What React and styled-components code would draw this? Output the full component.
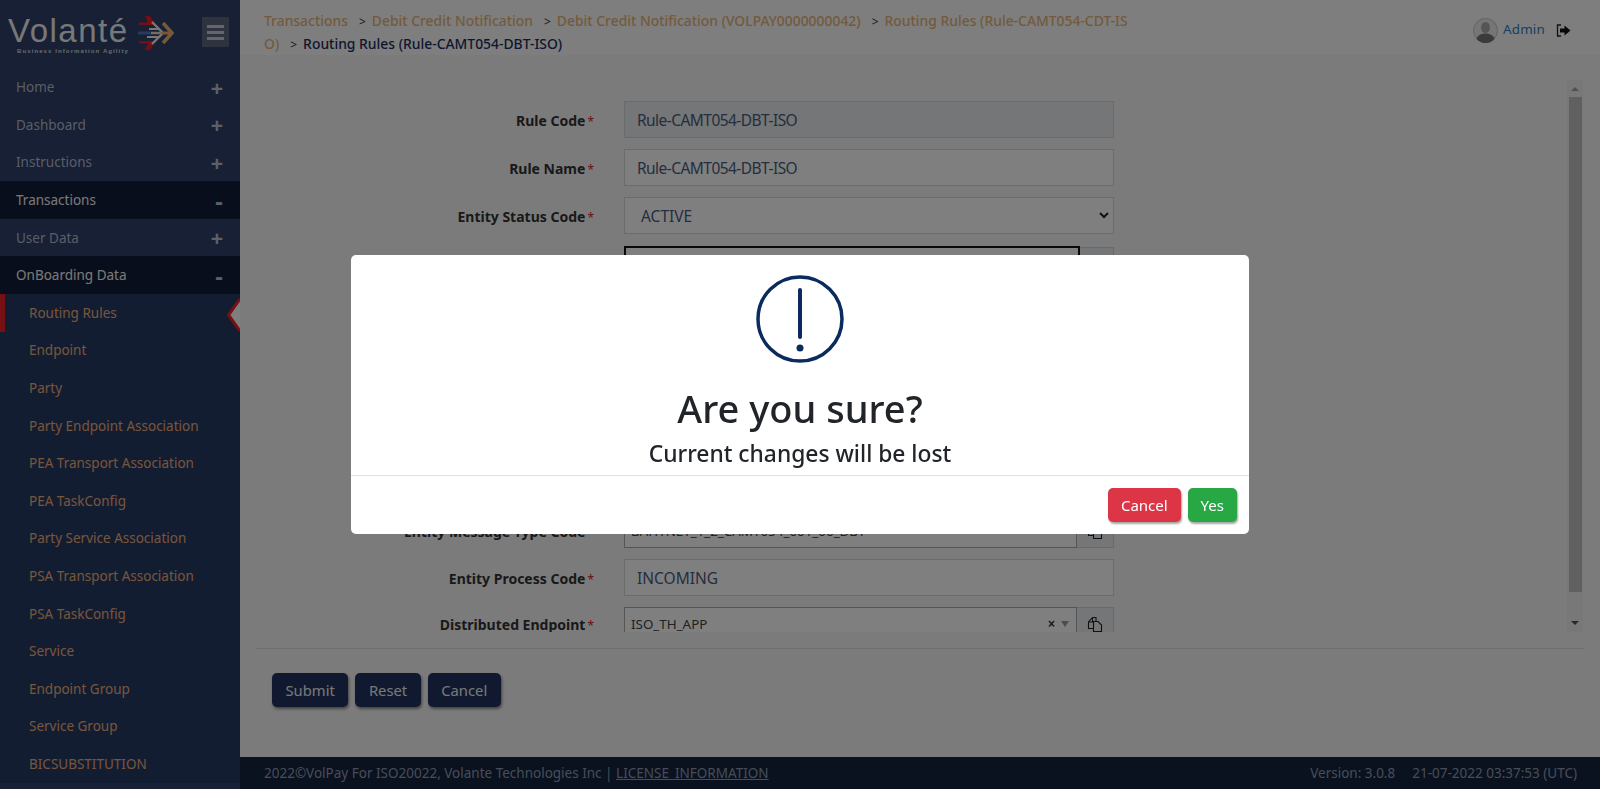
import React from 'react';
import styled, { createGlobalStyle } from 'styled-components';

const Global = createGlobalStyle`
  html, body { margin: 0; padding: 0; height: 100%; overflow: hidden; }
  body { font-family: "Noto Sans", "Open Sans", sans-serif; background: #f8f8f8; }
  * { box-sizing: border-box; }
`;
const Page = styled.div`display: flex; width: 1600px; height: 789px; overflow: hidden;`;
const Sidebar = styled.aside`width: 240px; flex: none; background: #2e4069; display: flex; flex-direction: column; overflow: hidden;`;
const Brand = styled.div`height: 68.5px; flex: none; display: flex; align-items: flex-start; padding: 17px 11px 0 8px; justify-content: space-between;`;
const LogoWrap = styled.div`display: flex; gap: 8px; margin-top: -1px;`;
const LogoText = styled.div`display: flex; flex-direction: column; align-items: flex-start; width: 121px;`;
const LogoWord = styled.div`font: 400 33px/30px "Liberation Sans", sans-serif; color: #f0f0f0; letter-spacing: 1.5px; height: 30px; white-space: nowrap;`;
const LogoSub = styled.div`font: 700 6px/8px "Liberation Sans", sans-serif; color: #d8d8d8; letter-spacing: 1.1px; white-space: nowrap; margin: 1px 0 0 9px;`;
const Burger = styled.div`width: 27px; height: 30px; background: #5c677f; display: flex; flex-direction: column; justify-content: center; gap: 3px; padding: 0 5px;`;
const BurgerLine = styled.span`height: 3px; background: #c9ccd6;`;
const NavRow = styled.div`
  height: 37.6px; flex: none; position: relative; display: flex; align-items: center; justify-content: space-between;
  padding: 0 16px; font-size: 13.5px; color: ${p => (p.$open ? '#f2f2f2' : '#b4bccb')};
  background: ${p => (p.$open ? '#121d38' : '#2e4069')};
`;
const NavSign = styled.span`font: 700 ${p => (p.$minus ? 24 : 21)}px/20px "Liberation Sans", sans-serif; color: #b9c0cf; margin: 3px 1px 0 0;`;
const SubRow = styled.div`
  height: 37.6px; flex: none; position: relative; display: flex; align-items: center; padding-left: 29px;
  font-size: 13.5px; color: #eeac78; background: #243a62;
  ${p => p.$active && 'border-left: 5px solid #ee2027; padding-left: 24px;'}
`;
const Notch = styled.svg`position: absolute; right: 0; top: 4px;`;
const Content = styled.div`flex: 1; display: flex; flex-direction: column; min-width: 0; background: #f6f6f6;`;
const Header = styled.header`height: 55px; flex: none; background: #fdfdfd; display: flex; justify-content: space-between; padding: 10px 27px 0 24px;`;
const Crumbs = styled.div`width: 872px; font-size: 13.9px; font-weight: 500; line-height: 22px; word-break: break-all; color: #e6b478;`;
const Sep = styled.span`color: #333; font-weight: 400; margin: 0 6px 0 11px; font-size: 12px;`;
const Current = styled.span`color: #1c2f5c;`;
const UserBox = styled.div`display: flex; align-items: flex-start; padding-top: 8px;`;
const AdminName = styled.span`font-size: 13.4px; color: #2f7fc8; margin: 2px 11px 0 5px; line-height: 19px; letter-spacing: 0.2px;`;
const LogoutIcon = styled.svg`margin: 6px 2px 0 0;`;
const Body = styled.div`height: 593px; flex: none; display: flex; padding: 25px 17px 16px 0; overflow: hidden;`;
const Form = styled.div`flex: 1; display: flex; flex-direction: column; gap: 11px; padding-top: 21px; overflow: hidden;`;
const Row = styled.div`display: grid; grid-template-columns: 354px 490px; column-gap: 30px; flex: none; height: ${p => p.$h || 37}px; align-items: center;`;
const Label = styled.label`text-align: right; font-size: 14px; font-weight: 700; color: #333; white-space: nowrap; padding-top: 1px;`;
const Star = styled.span`color: #e02020; margin-left: 2px; font-weight: 400; font-size: 12px;`;
const Input = styled.div`
  height: 100%; border: 1px solid #d6d6d6; background: ${p => (p.$ro ? '#e9ecef' : '#fff')}; color: #4a5c7c;
  font-size: 15.5px; display: flex; align-items: center; padding-left: ${p => p.$pad || 12}px; justify-content: space-between;
  ${p => p.$tight && 'letter-spacing: -0.55px;'}
`;
const Chevron = styled.svg`margin-right: 4px;`;
const PickRow = styled.div`display: flex; height: 100%;`;
const Pick = styled.div`
  flex: 1; border: ${p => (p.$focus ? '2px solid #111' : '1px solid #aaa')}; background: #fff; ${p => p.$focus && 'margin-top: 1px;'}
  display: flex; align-items: center; justify-content: space-between; padding: 0 7px 0 6px; color: #444; font-size: 13.4px; min-width: 0;
`;
const PickTools = styled.span`display: flex; align-items: center; gap: 6px; color: #333;`;
const ClearX = styled.span`font: 700 12px/12px "Liberation Sans", sans-serif;`;
const Drop = styled.span`width: 0; height: 0; border-left: 4px solid transparent; border-right: 4px solid transparent; border-top: 6px solid #999;`;
const Addon = styled.div`width: ${p => (p.$narrow ? 34 : 37)}px; flex: none; background: #e9ecef; border: 1px solid #ced4da; border-left: 0; display: flex; align-items: center; justify-content: center; ${p => p.$narrow && 'margin-top: 2px;'}`;
const Scroll = styled.div`width: 16px; height: 552px; flex: none; background: #f1f1f1; display: flex; flex-direction: column; align-items: center; justify-content: space-between; padding-top: 7px; padding-bottom: 7px;`;
const ScrollThumb = styled.div`width: 13px; height: 495px; background: #c1c1c1; margin-top: 3px; margin-bottom: 26px;`;
const Arrow = styled.span`width: 0; height: 0; flex: none; border-left: 4px solid transparent; border-right: 4px solid transparent; ${p => (p.$up ? 'border-bottom: 4px solid #a0a0a0;' : 'border-top: 4px solid #505050;')}`;
const Actions = styled.div`margin: 0 16px; border-top: 1px solid #dedede; padding: 24px 16px 0; display: flex; align-items: flex-start; gap: 7px; flex: 1;`;
const FormButton = styled.button`
  height: 34px; padding: 0 13.5px; border: 0; border-radius: 5px; background: #21335f; color: #f0f0f0; font: 400 14.8px "Noto Sans", sans-serif;
  box-shadow: 1px 2px 3px rgba(0,0,0,.45);
`;
const Footer = styled.footer`height: 32px; flex: none; background: #14233f; color: #8f9bb1; display: flex; justify-content: space-between; align-items: center; font-size: 13.5px; padding: 0 23px 0 24px;`;
const FooterLink = styled.span`text-decoration: underline;`;
const FooterRight = styled.div`display: flex; gap: 17px;`;
const Backdrop = styled.div`position: fixed; inset: 0; background: rgba(0,0,0,.5);`;
const Modal = styled.div`
  position: fixed; left: 351px; top: 255px; width: 898px; height: 279px; background: #fff; border-radius: 5px; display: flex; flex-direction: column;
`;
const ModalBody = styled.div`height: 221px; flex: none; display: flex; flex-direction: column; align-items: center; padding-top: 20px; border-bottom: 1px solid #dee2e6;`;
const Title = styled.h2`margin: 20px 0 0; font-size: 38px; line-height: 50px; font-weight: 500; color: #212529;`;
const SubTitle = styled.h4`margin: 5px 0 0; font-size: 22.8px; line-height: 32px; font-weight: 500; color: #212529;`;
const ModalFoot = styled.div`flex: 1; display: flex; justify-content: flex-end; gap: 7px; padding: 12px 12px 0 0;`;
const ModalButton = styled.button`
  height: 34px; padding: 0 13px; border: 0; border-radius: 5px; color: #fff; font: 400 15px "Noto Sans", sans-serif;
  background: ${p => p.$bg}; box-shadow: 1px 2px 2px rgba(0,0,0,.35);
`;

const Copy = () => (
  <svg width="16" height="17" viewBox="0 0 16 17" fill="none" stroke="#222" strokeWidth="1.100">
    <path d="M6.500 12.500H1.500V6L5.500 1.500H9V5" />
    <path d="M5.500 2V6H1.500" />
    <path d="M6.500 5.500H11L14.500 9V15.500H6.500Z" />
  </svg>
);
const Avatar = () => (
  <svg width="25" height="25" viewBox="0 0 25 25">
    <circle cx="12.500" cy="12.500" r="12" fill="#ededed" stroke="#c4c4c4" />
    <ellipse cx="12.500" cy="9.500" rx="4.400" ry="5.600" fill="#aaa" />
    <path d="M3.500 21c1-4 5-5.500 9-5.500s8 1.500 9 5.500a12 12 0 0 1-18 0Z" fill="#777" />
  </svg>
);
const LogoMark = () => (
  <svg width="37" height="34" viewBox="0 0 37 34" fill="none">
    <path d="M2 6.500H11L8 0H13L19 9H2Z" fill="#ed1c24" />
    <path d="M2 27.500H11L8 34H13L19 25H2Z" fill="#ed1c24" />
    <path d="M12 13H22M10 21H22" stroke="#f0f0f0" strokeWidth="2.200" />
    <path d="M15 6L26 17L15 28" stroke="#f0f0f0" strokeWidth="2.400" />
    <path d="M1 17H14" stroke="#4a78b8" strokeWidth="3" />
    <path d="M14 17H24" stroke="#f0d8c0" strokeWidth="2.500" />
    <path d="M26 7L35 17L26 27" stroke="#f0b070" strokeWidth="3.500" />
    <path d="M24 17H33" stroke="#f0b070" strokeWidth="3" />
  </svg>
);

const topNav = [['Home'], ['Dashboard'], ['Instructions'], ['Transactions', true], ['User Data'], ['OnBoarding Data', true]];
const subNav = ['Endpoint', 'Party', 'Party Endpoint Association', 'PEA Transport Association', 'PEA TaskConfig', 'Party Service Association', 'PSA Transport Association', 'PSA TaskConfig', 'Service', 'Endpoint Group', 'Service Group', 'BICSUBSTITUTION'];
const crumbs = ['Transactions', 'Debit Credit Notification', 'Debit Credit Notification (VOLPAY0000000042)', 'Routing Rules (Rule-CAMT054-CDT-ISO)'];

export default function App() {
  return (
    <Page>
      <Global />
      <Sidebar>
        <Brand>
          <LogoWrap>
            <LogoText>
              <LogoWord>Volanté</LogoWord>
              <LogoSub>Business Information Agility</LogoSub>
            </LogoText>
            <LogoMark />
          </LogoWrap>
          <Burger><BurgerLine /><BurgerLine /><BurgerLine /></Burger>
        </Brand>
        {topNav.map(([name, open]) => (
          <NavRow key={name} $open={open}>{name}<NavSign $minus={open}>{open ? '-' : '+'}</NavSign></NavRow>
        ))}
        <SubRow $active>
          Routing Rules
          <Notch width="14" height="35" viewBox="0 0 14 35">
            <path d="M14 1L2.500 17L14 33Z" fill="#fdfdfd" />
            <path d="M14 1L2.500 17L14 33" fill="none" stroke="#ee2027" strokeWidth="3" />
          </Notch>
        </SubRow>
        {subNav.map(n => <SubRow key={n}>{n}</SubRow>)}
      </Sidebar>
      <Content>
        <Header>
          <Crumbs>
            {crumbs.map(c => <React.Fragment key={c}>{c}<Sep>&gt;</Sep></React.Fragment>)}
            <Current>Routing Rules (Rule-CAMT054-DBT-ISO)</Current>
          </Crumbs>
          <UserBox>
            <Avatar />
            <AdminName>Admin</AdminName>
            <LogoutIcon width="15" height="13" viewBox="0 0 15 13">
              <path d="M5 1H1.500V12H5" fill="none" stroke="#222" strokeWidth="1.300" />
              <path d="M4 4.500H8.500V1.500L14.500 6.500L8.500 11.500V8.500H4Z" fill="#111" />
            </LogoutIcon>
          </UserBox>
        </Header>
        <Body>
          <Form>
            <Row><Label>Rule Code<Star>*</Star></Label><Input $ro $tight>Rule-CAMT054-DBT-ISO</Input></Row>
            <Row><Label>Rule Name<Star>*</Star></Label><Input $tight>Rule-CAMT054-DBT-ISO</Input></Row>
            <Row><Label>Entity Status Code<Star>*</Star></Label><Input $pad={16}>ACTIVE<Chevron width="10" height="7" viewBox="0 0 10 7"><path d="M1 1L5 5L9 1" fill="none" stroke="#222" strokeWidth="2" /></Chevron></Input></Row>
            <Row><Label /><PickRow><Pick $focus /><Addon $narrow><Copy /></Addon></PickRow></Row>
            <Row><Label /><Input /></Row>
            <Row><Label /><Input /></Row>
            <Row><Label /><Input /></Row>
            <Row $h={66}><Label /><Input /></Row>
            <Row $h={34}><Label>Entity Message Type Code<Star>*</Star></Label><PickRow><Pick>BAHTNET_1_2_CAMT054_001_06_DBT<PickTools><ClearX>×</ClearX></PickTools></Pick><Addon><Copy /></Addon></PickRow></Row>
            <Row><Label>Entity Process Code<Star>*</Star></Label><Input>INCOMING</Input></Row>
            <Row $h={34}><Label>Distributed Endpoint<Star>*</Star></Label><PickRow><Pick>ISO_TH_APP<PickTools><ClearX>×</ClearX><Drop /></PickTools></Pick><Addon><Copy /></Addon></PickRow></Row>
          </Form>
          <Scroll><Arrow $up /><ScrollThumb /><Arrow /></Scroll>
        </Body>
        <Actions>
          <FormButton>Submit</FormButton>
          <FormButton>Reset</FormButton>
          <FormButton>Cancel</FormButton>
        </Actions>
        <Footer>
          <div>2022©VolPay For ISO20022, Volante Technologies Inc | <FooterLink>LICENSE_INFORMATION</FooterLink></div>
          <FooterRight><span>Version: 3.0.8</span><span>21-07-2022 03:37:53 (UTC)</span></FooterRight>
        </Footer>
      </Content>
      <Backdrop />
      <Modal>
        <ModalBody>
          <svg width="88" height="88" viewBox="0 0 88 88" fill="none">
            <circle cx="44" cy="44" r="42" stroke="#0b2a5e" strokeWidth="3.500" />
            <path d="M44 15V62" stroke="#0b2a5e" strokeWidth="4" strokeLinecap="round" />
            <circle cx="44" cy="73" r="3.500" fill="#0b2a5e" />
          </svg>
          <Title>Are you sure?</Title>
          <SubTitle>Current changes will be lost</SubTitle>
        </ModalBody>
        <ModalFoot>
          <ModalButton $bg="#dc3545">Cancel</ModalButton>
          <ModalButton $bg="#28a745">Yes</ModalButton>
        </ModalFoot>
      </Modal>
    </Page>
  );
}
